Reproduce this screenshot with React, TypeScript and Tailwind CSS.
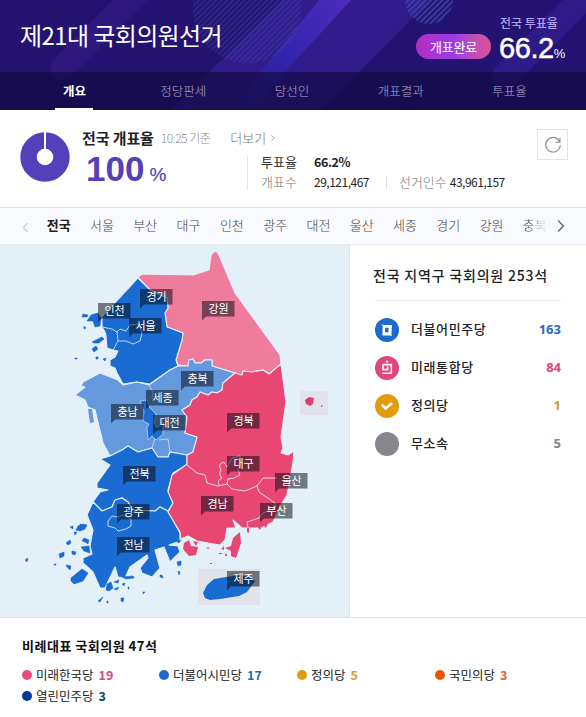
import React from "react"
import clsx from "clsx"
import { ChevronLeft, ChevronRight } from "lucide-react"

const tabs = ["개요", "정당판세", "당선인", "개표결과", "투표율"]

const regions = [
  "전국",
  "서울",
  "부산",
  "대구",
  "인천",
  "광주",
  "대전",
  "울산",
  "세종",
  "경기",
  "강원",
  "충북",
]

const districtSeats = [
  { name: "더불어민주당", seats: 163, color: "text-[#2a6bc0]", icon: <DemocraticIcon /> },
  { name: "미래통합당", seats: 84, color: "text-[#d9487a]", icon: <FutureIcon /> },
  { name: "정의당", seats: 1, color: "text-[#dc9a22]", icon: <JusticeIcon /> },
  { name: "무소속", seats: 5, color: "text-[#85868c]", icon: <IndependentIcon /> },
]

const proportionalSeats = [
  { name: "미래한국당", seats: 19, dot: "bg-[#e84a7a]", color: "text-[#cf4a80]" },
  { name: "더불어시민당", seats: 17, dot: "bg-[#1f6bcb]", color: "text-[#1f6bb8]" },
  { name: "정의당", seats: 5, dot: "bg-[#dc9c10]", color: "text-[#cf9f2c]" },
  { name: "국민의당", seats: 3, dot: "bg-[#ea5504]", color: "text-[#e0642c]" },
  { name: "열린민주당", seats: 3, dot: "bg-[#053c9a]", color: "text-[#0d4a70]" },
]

const mapLabels = [
  { name: "경기", x: 140, y: 289 },
  { name: "인천", x: 98, y: 303 },
  { name: "서울", x: 129, y: 318 },
  { name: "강원", x: 202, y: 301 },
  { name: "충북", x: 181, y: 371 },
  { name: "세종", x: 146, y: 390 },
  { name: "충남", x: 111, y: 404 },
  { name: "대전", x: 153, y: 415 },
  { name: "전북", x: 123, y: 466 },
  { name: "경북", x: 227, y: 413 },
  { name: "대구", x: 227, y: 456 },
  { name: "울산", x: 275, y: 473 },
  { name: "광주", x: 117, y: 504 },
  { name: "전남", x: 117, y: 537 },
  { name: "경남", x: 201, y: 496 },
  { name: "부산", x: 260, y: 503 },
  { name: "제주", x: 227, y: 571 },
]

function DemocraticIcon() {
  return (
    <svg viewBox="0 0 24 24" className="size-6">
      <circle cx="12" cy="12" r="12" fill="#1c6bcd" />
      <path fill="#fff" fillRule="evenodd" d="M6.8 6.2l2 .8h8.2l-.6 9.2.6 1.8-2-.6H7.4l.3-9.2zM10.2 9.8l-.2 4.4 3.4.3.2-4.7z" />
    </svg>
  )
}

function FutureIcon() {
  return (
    <svg viewBox="0 0 24 24" className="size-6">
      <circle cx="12" cy="12" r="12" fill="#e3457a" />
      <circle cx="12" cy="5.6" r="1.2" fill="#fff" />
      <path d="M12.6 10.6v3H8V8.6h8.3v8.6H7.2" fill="none" stroke="#fff" strokeWidth="1.6" />
    </svg>
  )
}

function JusticeIcon() {
  return (
    <svg viewBox="0 0 24 24" className="size-6">
      <circle cx="12" cy="12" r="12" fill="#e39b0a" />
      <path d="M6.8 10.8l3.8 3.7 6.6-5.6" fill="none" stroke="#fff" strokeWidth="2.6" />
    </svg>
  )
}

function IndependentIcon() {
  return (
    <svg viewBox="0 0 24 24" className="size-6">
      <circle cx="12" cy="12" r="12" fill="#86878c" />
    </svg>
  )
}

function HeaderArt() {
  return (
    <svg viewBox="0 0 586 110" className="absolute inset-0 h-[110px] w-[586px]">
      <defs>
        <linearGradient id="streak" x1="0" y1="1" x2="1" y2="0">
          <stop offset="0" stopColor="#2a1a8c" />
          <stop offset=".5" stopColor="#3424ac" />
          <stop offset="1" stopColor="#4c2cba" />
        </linearGradient>
        <pattern id="hatch" width="4" height="4" patternUnits="userSpaceOnUse" patternTransform="rotate(45)">
          <path d="M1 0v4" stroke="#4050b0" strokeWidth="1.3" />
        </pattern>
      </defs>
      <rect width="586" height="110" fill="#241370" />
      <path d="M62 68L138-8" stroke="#2f197f" strokeWidth="24" strokeLinecap="round" />
      <path d="M171 110L282 0H430L322 110z" fill="#321b8a" />
      <path d="M229 110L319 0H351L250 110z" fill="url(#streak)" />
      <path d="M505 76L590-9" stroke="#2f1b87" strokeWidth="26" strokeLinecap="round" />
      <circle cx="247" cy="9" r="54" fill="url(#hatch)" opacity=".5" />
      <circle cx="429" cy="0" r="24" fill="url(#hatch)" />
    </svg>
  )
}

function Header() {
  return (
    <header className="relative h-[110px] overflow-hidden text-white">
      <HeaderArt />
      <div className="relative flex h-[72px] justify-between px-[20px]">
        <h1 className="pt-[17px] text-[24px] leading-[36px] font-normal tracking-[-0.6px]">제21대 국회의원선거</h1>
        <div className="flex">
          <div className="mt-[34px] mr-[8px] flex h-[25px] w-[75px] items-center justify-center rounded-full bg-linear-to-r from-[#b42cbe] via-[#9a3ce6] to-[#e04e94] text-[13px] tracking-[-0.2px]">
            개표완료
          </div>
          <div className="w-[67px] pt-[14px]">
            <div className="pl-[1px] text-[12px] leading-[18px] font-medium text-[#b4a0f0]">전국 투표율</div>
            <div className="flex items-baseline font-['Liberation_Sans',sans-serif] leading-[32px]">
              <span className="text-[29px] tracking-[-0.4px] [-webkit-text-stroke:0.5px_white]">66.2</span>
              <span className="text-[13px]">%</span>
            </div>
          </div>
        </div>
      </div>
      <nav className="relative flex h-[38px] bg-[#0e0838]/60 pr-[22px] pl-[20px]">
        {tabs.map((tab, i) => (
          <div
            key={tab}
            className={clsx(
              "relative flex flex-1 items-center justify-center text-[12.5px]",
              i == 0 ? "font-bold text-white" : "font-light text-[#b0a6cc]",
            )}
          >
            {tab}
            {i == 0 && <div className="absolute bottom-0 h-[2px] w-[38px] bg-white" />}
          </div>
        ))}
      </nav>
    </header>
  )
}

function CountSummary() {
  return (
    <section className="flex h-[97px] pl-[20px]">
      <svg viewBox="0 0 50 50" className="mt-[22px] size-[50px]">
        <circle cx="25" cy="25" r="16.5" fill="none" stroke="#553fba" strokeWidth="16.4" />
        <path d="M25 0v17" stroke="#fff" strokeWidth="2" />
      </svg>
      <div className="ml-[12px] w-[165px] pt-[18px]">
        <div className="flex items-center leading-[20px] whitespace-nowrap">
          <span className="text-[15px] font-bold tracking-[-0.1px] text-[#222]">전국 개표율</span>
          <span className="ml-[7px] text-[12px] font-light tracking-[-0.5px] text-[#888]">10:25 기준</span>
          <span className="ml-[13px] h-[11px] w-px bg-[#ddd]" />
          <span className="ml-[7px] text-[13px] font-light text-[#777]">더보기</span>
          <ChevronRight className="ml-[2px] size-[10px] shrink-0 text-[#888]" />
        </div>
        <div className="flex items-baseline pl-[4px] font-['Liberation_Sans',sans-serif] leading-[42px] text-[#553fba]">
          <span className="text-[35px] font-bold">100</span>
          <span className="ml-[5px] text-[19px] [-webkit-text-stroke:0.2px_#553fba]">%</span>
        </div>
      </div>
      <div className="mt-[46px] flex h-[34px] border-l border-[#e4e4e4] pl-[13px] text-[13px] leading-[20px] whitespace-nowrap">
        <dl className="-mt-[4px] grid grid-cols-[53px_auto]">
          <dt className="text-[#333]">투표율</dt>
          <dd className="text-[12.5px] font-bold tracking-[-0.4px] text-[#222]">66.2%</dd>
          <dt className="font-light text-[#777]">개표수</dt>
          <dd className="text-[12px] tracking-[-0.5px] text-[#222]">29,121,467</dd>
        </dl>
        <div className="mt-[16px] ml-[17px] flex h-[20px] items-center">
          <span className="h-[11px] w-px bg-[#ddd]" />
          <span className="ml-[12px] font-light text-[#777]">선거인수</span>
          <span className="ml-[3px] text-[12px] tracking-[-0.5px] text-[#222]">43,961,157</span>
        </div>
      </div>
      <button className="mt-[19px] mr-[18px] ml-auto flex size-[31px] items-center justify-center border border-[#e3e3e3]">
        <svg viewBox="0 0 18 18" className="size-[18px]" fill="none" stroke="#8c8c8c" strokeWidth="1.1">
          <path d="M15.9 6.2A7.3 7.3 0 1 0 16.3 9.5M16 1.8V6.3H11.6" />
        </svg>
      </button>
    </section>
  )
}

function RegionBar() {
  return (
    <div className="flex h-[38px] items-center border-y border-t-[#dce0e8] border-b-[#e6e9ee] bg-[#f9fafd]">
      <ChevronLeft className="ml-[17px] size-[17px] shrink-0 translate-y-px text-[#c8cad0]" strokeWidth={1.5} />
      <div className="-mt-[2px] flex w-[515px] pl-[3px]">
        {regions.map((region, i) => (
          <div
            key={region}
            className={clsx(
              "shrink-0 text-center text-[13px] leading-[20px]",
              i == 0 ? "font-bold text-[#222]" : "font-light text-[#444]",
              i == regions.length - 1 ? "w-[35px] pl-[8px] mask-r-from-40%" : "w-[43.3px]",
            )}
          >
            {region}
          </div>
        ))}
      </div>
      <ChevronRight className="ml-[2px] size-[20px] shrink-0 text-[#666]" strokeWidth={1.7} />
    </div>
  )
}

function KoreaMap() {
  return (
    <svg viewBox="0 245 349 372" className="h-[372px] w-[349px]">
      <g stroke="#e4f0f7" strokeWidth="1.1" strokeLinejoin="round">
        {/* 강원 */}
        <path
          fill="#ef7b9d"
          d="M138 277L142 274L193 275L209 270L211 256Q214 249 218 253L227 274L235 293L280 355L281 364L269 374L263 370L252 372L243 371L242 375L235 373L212 366L212 360L205 360L201 363L195 363L193 359L189 360L188 366L178 365L176 360L182 340L183 333L175 330L167 327L165 313L168 308L167 298L150 290z"
        />
        {/* 경기, 인천 */}
        <path
          fill="#1b6cd2"
          d="M138 278L150 290L167 298L168 308L165 313L167 327L175 330L183 333L182 340L176 360L178 366L170 370L150 384L137 382L123 384L117 373L115 368L110 366L110 360L115 357L118 351L113 350L107 348L106 336L105 332L102 327L102 317L113 305z"
        />
        {/* 충남, 충북 */}
        <path
          fill="#6499de"
          d="M100 373L118 380L123 385L137 382L149 385L170 370L178 366L188 366L189 360L193 359L195 363L201 363L205 360L212 360L212 366L235 373L223 383L222 390L217 393L212 392L208 395L200 392L197 397L192 400L190 405L187 407L182 410L187 417L185 433L197 437L196 442L193 452L187 455L170 452L168 457L158 457L152 448L138 452L128 446L122 450L110 456L103 443L95 410L88 407L85 400L75 395L85 387L81 386L83 382z"
        />
        {/* 전북 */}
        <path
          fill="#1b6cd2"
          d="M110 456L122 450L128 446L138 452L152 448L158 457L168 457L170 452L187 455L187 465L173 473L168 490L173 503L168 511L160 507L155 511L133 510L128 502L122 498L115 500L112 507L102 511L93 502L100 492L108 490L97 488L97 483L110 465L100 459z"
        />
        {/* 전남 */}
        <path
          fill="#1b6cd2"
          d="M93 502L102 511L112 507L115 500L122 498L128 502L133 510L155 511L160 507L168 511L180 533L180 541L169 545L178 546L180 552L170 562L164 547L155 550L160 568L152 577L142 573L140 568L148 558L147 555L130 567L125 578L118 577L115 567L105 588L100 588L93 572L83 563L83 558L92 554L90 546L93 530L87 515z"
        />
        {/* 경북, 경남 */}
        <path
          fill="#e84673"
          d="M281 364L286 402L281 437L283 448L281 453L288 455L294 451L293 462L287 495L281 505L273 522L263 527L255 528L242 528L233 520L236 528L227 528L225 540L220 545L208 543L197 541L188 536L181 539L180 532L168 512L173 503L168 492L172 475L187 464L187 455L193 452L197 437L185 433L187 417L182 410L187 407L190 405L192 400L197 397L200 392L208 395L212 392L217 393L222 390L223 383L235 373L242 375L243 371L252 372L263 370L269 374z"
        />
      </g>
      <g fill="none" stroke="#f3dbe6" strokeWidth="1">
        <path d="M187 465L197 473L205 475L207 483L218 486L227 484L232 489L245 491L257 486L263 478L277 478M219 485Q217 480 222 478Q218 474 221 470Q217 464 224 462L227 467L232 458L240 456L241 464L238 470L240 475L234 478L228 479L227 484M257 486L259 492L275 503L275 508L263 513L259 518L247 522L248 528" />
      </g>
      <g fill="none" stroke="#b8d6f4" strokeWidth="1">
        <path d="M102 327L112 329L117 332L120 329L126 331L130 325L138 324L142 333L140 341L133 344L126 341L118 341L117 332M118 341L113 350" />
        <path d="M108 521L112 516L118 517L123 515L131 519L131 526L126 529L118 531L115 528L108 526z" />
        <path d="M149 385L153 392L152 399M159 440L168 439L170 452M155 438L152 448" />
      </g>
      <path
        fill="#1b6cd2"
        stroke="#b8d6f4"
        strokeWidth=".8"
        d="M140 401L147 400L150 408L156 414L154 422L157 428L163 422L163 434L156 440L152 436L148 440L147 428L149 424L143 421L144 411z"
      />
      {/* 서해안, 남해안 섬 */}
      <g fill="#1b6cd2" stroke="#1b6cd2" strokeWidth=".6" strokeLinejoin="round">
        <path d="M83 314l5 1-1 2-5 0zM91 315l7-2 3 5-1 8-5 1-2-6-6 0zM92 342l10-5 2 2-5 4-5 0zM92 349l4-3 2 3-4 3zM96 357h2v2h-2zM103 359l3-1-1 3zM75 358h2v1h-2zM84 326l2 2-2 1z" />
        <path d="M78 526l5-2 4 1-2 4-5 2-4-1zM70 527l3-1 0 3zM80 524l2 1-2 2zM74 532l3 0-2 3zM66 543l4-3 1 3-3 2zM84 538l5 2-1 4-3-2-3-1zM81 547l8-1 1 7-6-2zM59 554l5-2 0 4-4 2zM72 551l4 1-1 3-3-1zM66 565l5 1-1 4-3-3zM25 560l3-2-1 4zM54 564h2v1h-2zM71 578l11-9 6 4-5 8-9 3-3-3zM107 584l4-2 2 6-4 3-3-1zM114 582l5-2-1 3zM122 577l11-1 1 2-8 1zM114 589l5-2-2 3zM122 584l3-1-1 3zM98 601l5-4-3 5zM121 598l3 0-1 4-2-1zM143 592l2 0-2 2zM128 587h1v2h-1zM107 601h1v2h-1zM160 575l2 0 1 3-3-1zM176 541l5-1-2 3zM177 562l4-1 0 4-3 1zM178 571l2 1-1 3z" />
      </g>
      <path fill="#6499de" d="M88 409l4 0 2 13-4 1z" />
      <path
        fill="#e84673"
        d="M184 543l5-3 2 6 7 1-2 8-7 1-6-7zM193 541l5 1-2 4zM206 547l4 1-2 1zM221 549l3-3 0 4zM219 553h3v1h-3zM233 538l7-6 1 11-5 15-5-2 0-5-6-3 6-2zM247 528l2 0 0 5-2-1zM256 525l6 1-2 4zM264 524l4 1-3 3zM210 563h2v1h-2zM225 554h2v2h-2z"
      />
      <rect x="300" y="391" width="28" height="24" fill="#e1e2ea" />
      <path fill="#dc3f72" d="M305 400l4-3 5 1-1 6-3 2-4-2zM321 405l2 1-2 1z" />
      <rect x="198" y="569" width="62" height="36" fill="#e1e2ea" />
      <path fill="#1b6cd2" d="M203 593L207 585L214 579L226 577L240 575L252 578L255 581L247 592L239 596L220 599L210 600L205 598z" />
      {mapLabels.map(({ name, x, y }) => (
        <g key={name} transform={`translate(${x} ${y})`}>
          <path d="M0 0H32.5V15.5H4L0 19.5z" fill="#080c14" fillOpacity=".52" />
          <text x="16.5" y="12" textAnchor="middle" fill="#fff" className="text-[11px]">
            {name}
          </text>
        </g>
      ))}
    </svg>
  )
}

function DistrictPanel() {
  return (
    <section className="flex-1 pt-[19px] pr-[25px] pl-[23px]">
      <h2 className="text-[14px] leading-[22px] font-medium tracking-[0.8px] whitespace-nowrap text-[#222]">
        전국 지역구 국회의원 253석
      </h2>
      <div className="mt-[14px] ml-[2px] border-t border-[#e9e9ec] pt-[10px]">
        {districtSeats.map((party) => (
          <div key={party.name} className="flex h-[38px] items-center">
            {party.icon}
            <span className="-mt-[2px] ml-[12px] text-[13px] font-medium tracking-[0.6px] text-[#222]">{party.name}</span>
            <span className={clsx("ml-auto font-['Noto_Sans',sans-serif] text-[13px] font-bold", party.color)}>
              {party.seats}
            </span>
          </div>
        ))}
      </div>
    </section>
  )
}

function ProportionalPanel() {
  return (
    <section className="h-[100px] border-t border-[#dde2e6] px-[22px] pt-[18px]">
      <h2 className="text-[13px] leading-[20px] font-bold tracking-[0.5px] text-[#111]">비례대표 국회의원 47석</h2>
      <div className="mt-[8px] grid grid-cols-[137px_138px_138px_auto] leading-[21px]">
        {proportionalSeats.map((party) => (
          <div key={party.name} className="flex items-center text-[12.5px] whitespace-nowrap text-[#222]">
            <span className={clsx("size-[10px] rounded-full", party.dot)} />
            <span className="ml-[4px]">{party.name}</span>
            <span className={clsx("ml-[5px] font-bold", party.color)}>{party.seats}</span>
          </div>
        ))}
      </div>
    </section>
  )
}

export default function App() {
  return (
    <div className="h-[717px] w-[586px] overflow-hidden bg-white font-['Noto_Sans_CJK_KR',sans-serif]">
      <Header />
      <CountSummary />
      <RegionBar />
      <main className="flex h-[372px]">
        <div className="w-[350px] border-r border-[#dde5ea] bg-[#e4f0f7]">
          <KoreaMap />
        </div>
        <DistrictPanel />
      </main>
      <ProportionalPanel />
    </div>
  )
}
